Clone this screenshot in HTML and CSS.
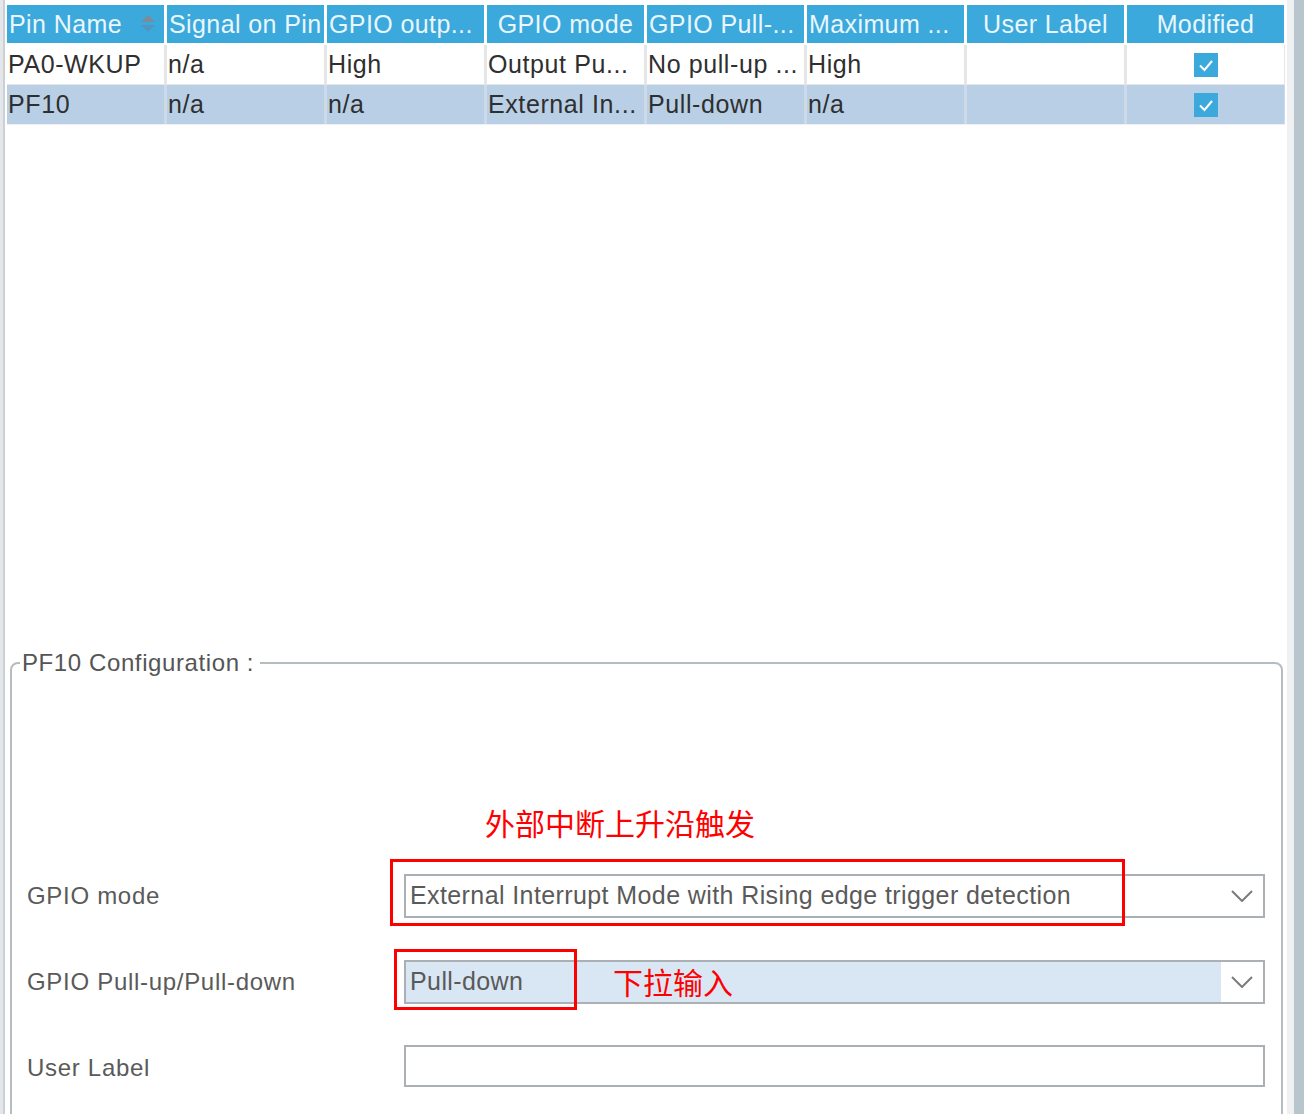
FILE: index.html
```html
<!DOCTYPE html>
<html lang="en">
<head>
<meta charset="utf-8">
<title>Pin Configuration</title>
<link rel="stylesheet" href="styles.css">
</head>
<body>
<div class="main">
  <div class="table">
    <div class="thead">
      <div class="th th-sort"><span class="th-text">Pin Name</span>
        <svg class="sort-icon" width="16" height="22" viewBox="0 0 16 22"><polygon points="8,2 15,9 1,9" fill="#7c8c97"/><polygon points="1,12 15,12 8,19" fill="#4f96c2"/></svg>
      </div>
      <div class="th th-clip">Signal on Pin</div>
      <div class="th th-left" title="GPIO output level">GPIO outp...</div>
      <div class="th">GPIO mode</div>
      <div class="th th-left" title="GPIO Pull-up/Pull-down">GPIO Pull-...</div>
      <div class="th th-left" title="Maximum output speed">Maximum ...</div>
      <div class="th">User Label</div>
      <div class="th">Modified</div>
    </div>
    <div class="row">
      <div class="td">PA0-WKUP</div>
      <div class="td">n/a</div>
      <div class="td">High</div>
      <div class="td" title="Output Push Pull">Output Pu...</div>
      <div class="td" title="No pull-up and no pull-down">No pull-up ...</div>
      <div class="td">High</div>
      <div class="td"></div>
      <div class="td td-check"><span class="check"><svg width="24" height="24" viewBox="0 0 24 24"><polyline points="6,12.5 10.5,17 18,8" fill="none" stroke="#fff" stroke-width="2"/></svg></span></div>
    </div>
    <div class="row row-selected">
      <div class="td">PF10</div>
      <div class="td">n/a</div>
      <div class="td">n/a</div>
      <div class="td" title="External Interrupt Mode with Rising edge trigger detection">External In...</div>
      <div class="td">Pull-down</div>
      <div class="td">n/a</div>
      <div class="td"></div>
      <div class="td td-check"><span class="check"><svg width="24" height="24" viewBox="0 0 24 24"><polyline points="6,12.5 10.5,17 18,8" fill="none" stroke="#fff" stroke-width="2"/></svg></span></div>
    </div>
  </div>

  <fieldset class="config">
    <legend class="config-legend">PF10 Configuration :</legend>
    <div class="config-grid">
      <div class="annot annot-text annot-text-1">外部中断上升沿触发</div>
      <div class="annot annot-box annot-box-1"></div>
      <div class="annot annot-text annot-text-2">下拉输入</div>
      <div class="annot annot-box annot-box-2"></div>

      <div class="label">GPIO mode</div>
      <div class="combo">
        <span class="combo-text">External Interrupt Mode with Rising edge trigger detection</span>
        <span class="combo-btn"><svg width="22" height="12" viewBox="0 0 22 12"><polyline points="1,1 11,11 21,1" fill="none" stroke="#7b7b7b" stroke-width="2"/></svg></span>
      </div>

      <div class="label">GPIO Pull-up/Pull-down</div>
      <div class="combo combo-selected">
        <span class="combo-text">Pull-down</span>
        <span class="combo-btn"><svg width="22" height="12" viewBox="0 0 22 12"><polyline points="1,1 11,11 21,1" fill="none" stroke="#7b7b7b" stroke-width="2"/></svg></span>
      </div>

      <div class="label">User Label</div>
      <div class="input"></div>
    </div>
  </fieldset>
</div>
<div class="scrollbar"><div class="scroll-track"></div><div class="scroll-thumb"></div></div>
</body>
</html>
```

FILE: styles.css
```css
* { box-sizing: border-box; }

html, body {
  margin: 0;
  padding: 0;
  width: 1304px;
  height: 1114px;
  overflow: hidden;
  background: #ffffff;
}

body {
  display: flex;
  font-family: "Liberation Sans", Arial, sans-serif;
}

.main {
  flex: 1;
  padding: 5px 2px 0 7px;
  background: linear-gradient(to right, #e4e7ea 0, #e4e7ea 3px, #cbd0d4 3px, #cbd0d4 5px, #ffffff 5px);
}

.scrollbar {
  width: 17px;
  display: flex;
}
.scroll-track { width: 7px; background: #eef0f2; }
.scroll-thumb { flex: 1; background: #b8c5cd; }

/* table */
.thead, .row {
  display: grid;
  grid-template-columns: repeat(8, 157px);
  column-gap: 3px;
}

.thead {
  height: 38px;
  margin-bottom: 2px;
}

.th {
  background: #3ba9dc;
  color: #eaf6fd;
  font-size: 25px;
  letter-spacing: 0.4px;
  line-height: 38px;
  text-align: center;
  padding: 0 2px;
  white-space: nowrap;
  overflow: hidden;
}
.th-left, .th-clip { text-align: left; }

.th-sort {
  display: flex;
  justify-content: space-between;
  align-items: center;
  text-align: left;
  padding-right: 8px;
}
.sort-icon { flex: none; }

.row {
  height: 40px;
  background: #e4e6e8;
  border-bottom: 1px solid #e4e6e8;
}

.td {
  background: #ffffff;
  color: #2f2f2f;
  font-size: 25px;
  letter-spacing: 0.6px;
  line-height: 39px;
  padding-left: 1px;
  white-space: nowrap;
  overflow: hidden;
}

.row-selected {
  background: #ccdaea;
  border-bottom-color: #eef0f2;
}
.row-selected .td { background: #b8cfe6; }

.td-check {
  display: flex;
  align-items: center;
  justify-content: center;
}
.check {
  width: 24px;
  height: 24px;
  background: #3ba9dc;
  display: block;
}
.check svg { display: block; }

/* configuration */
.config {
  margin: 524px 2px 0 3px;
  border: 2px solid #b6bdc1;
  border-radius: 8px;
  padding: 0 16px 60px 8px;
  min-width: 0;
}

.config-legend {
  font-size: 24px;
  letter-spacing: 0.6px;
  line-height: 28px;
  color: #555555;
  padding: 0 6px 0 2px;
}

.config-grid {
  position: relative;
  display: grid;
  grid-template-columns: 377px 1fr;
  grid-auto-rows: 44px;
  row-gap: 42px;
  margin-left: 7px;
  padding-top: 197px;
}

.label {
  font-size: 24px;
  letter-spacing: 0.7px;
  color: #5a5a5a;
  display: flex;
  align-items: center;
}

.combo {
  display: flex;
  border: 2px solid #aab0b4;
  background: #ffffff;
}
.combo-text {
  flex: 1;
  font-size: 25px;
  letter-spacing: 0.4px;
  line-height: 39px;
  color: #5a5a5a;
  padding-left: 4px;
  white-space: nowrap;
  overflow: hidden;
}
.combo-btn {
  width: 42px;
  display: flex;
  align-items: center;
  justify-content: center;
  background: #ffffff;
}
.combo-selected .combo-text { background: #d9e7f5; }

.input {
  border: 2px solid #aab0b4;
  background: #ffffff;
  height: 42px;
  margin-top: -1px;
}

/* annotations overlay */
.annot { position: absolute; }
.annot-text {
  font-family: "Noto Sans CJK SC", sans-serif;
  font-size: 30px;
  line-height: 36px;
  color: #ff0000;
  white-space: nowrap;
}
.annot-text-1 { left: 458px; top: 127px; }
.annot-text-2 { left: 586px; top: 286px; }

.annot-box {
  border: 3px solid #ff0000;
}
.annot-box-1 { left: 363px; top: 182px; width: 735px; height: 67px; }
.annot-box-2 { left: 367px; top: 272px; width: 183px; height: 61px; }
```
